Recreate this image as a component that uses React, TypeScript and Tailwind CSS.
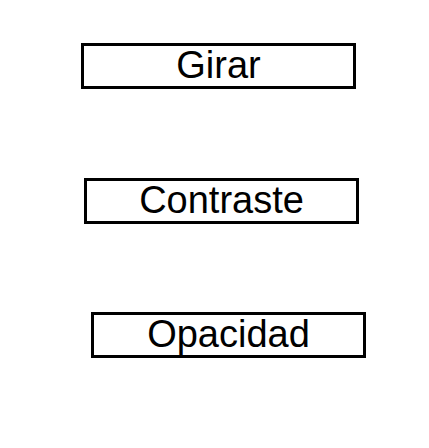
const items = [
  { label: "Girar", ml: "ml-[81px]", mt: "mt-[43px]" },
  { label: "Contraste", ml: "ml-[84px]", mt: "mt-[89px]" },
  { label: "Opacidad", ml: "ml-[91px]", mt: "mt-[88px]" },
];

export default function App() {
  return (
    <div className="w-[429px] h-[448px] bg-white flex flex-col font-['Liberation_Sans',Arial,sans-serif] text-black">
      {items.map((item) => (
        <button
          key={item.label}
          className={`${item.ml} ${item.mt} w-[275px] h-[46px] border-[3px] border-solid border-black bg-white flex items-center justify-center pb-[3px] text-[38px] leading-none`}
        >
          {item.label}
        </button>
      ))}
    </div>
  );
}
